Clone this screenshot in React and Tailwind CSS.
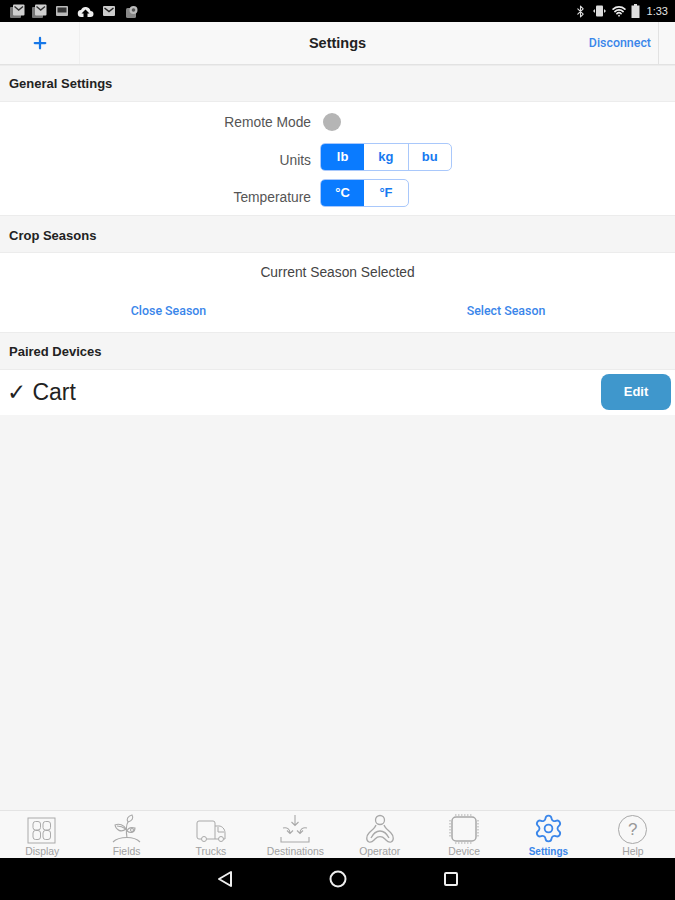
import React from "react";
import { Plus, Bluetooth, Wifi, Settings } from "lucide-react";

const font = { fontFamily: '"Liberation Sans", Arial, sans-serif' };
const linkFont = { fontFamily: 'Roboto, Arial, sans-serif' };

const SectionHeader = ({ title, className = "" }) => (
  <div className={`flex shrink-0 items-center border-y border-[#ececec] bg-[#f5f5f5] pl-[9px] text-[13px] font-bold text-[#222] ${className}`}>
    {title}
  </div>
);

const Segmented = ({ options }) => (
  <div className="flex h-[28px] w-fit overflow-hidden rounded-[5px] border border-[#a9c8fb] bg-white text-[13px] font-bold text-[#1679f0]">
    {options.map((opt, i) => (
      <div
        key={opt}
        className={`flex w-[43.3px] items-center justify-center ${i === 0 ? "bg-[#0a7bff] text-white" : ""} ${i === 2 ? "border-l border-[#a9c8fb]" : ""}`}
      >
        {opt}
      </div>
    ))}
  </div>
);

const SettingRow = ({ label, children, className = "", labelClass = "" }) => (
  <div className={`flex items-center ${className}`}>
    <div className={`w-[311px] text-right text-[13.8px] text-[#555] ${labelClass}`}>{label}</div>
    <div className="ml-[9px]">{children}</div>
  </div>
);

const MailStack = () => (
  <svg width="16" height="16" viewBox="0 0 16 16">
    <rect x="1" y="4" width="11" height="11" rx="1" fill="#777" />
    <rect x="4" y="1.5" width="11.5" height="11" rx="1" fill="#cfcfcf" />
    <path d="M5.5 3.5l4.2 3.5 4.3-3.5" fill="none" stroke="#333" strokeWidth="1.4" />
  </svg>
);

const icons = {
  Display: (
    <svg width="30" height="27" viewBox="0 0 30 27" fill="none" stroke="#aaa" strokeWidth="1">
      <rect x="1" y="1" width="27" height="25" />
      <rect x="6" y="4.5" width="7.5" height="8.5" rx="2.5" />
      <rect x="6" y="13.5" width="7.5" height="9" rx="2.5" />
      <rect x="16" y="4.5" width="7.5" height="8.5" rx="2.5" />
      <rect x="16" y="13.5" width="7.5" height="9" rx="2.5" />
    </svg>
  ),
  Fields: (
    <svg width="30" height="30" viewBox="0 0 30 30" fill="none" stroke="#a8a8a8" strokeWidth="1.1">
      <path d="M16 8c-2-3 0-6 4-7 2 3 0 6-4 7z" />
      <path d="M16 8c-2 3-2 9-1 16" />
      <path d="M14 15c-2-4-7-6-11-4 1 5 6 8 11 4z" />
      <path d="M5 12c3 0 6 1 9 3" />
      <path d="M15 17c1-3 4-4 8-3 0 4-4 6-8 3z" />
      <circle cx="20" cy="16" r="1.5" />
      <path d="M1 28c3-3 8-4.500 14-4.500s10 1.500 13 4.500" />
    </svg>
  ),
  Trucks: (
    <svg width="30" height="24" viewBox="0 0 30 24" fill="none" stroke="#a8a8a8" strokeWidth="1">
      <path d="M5 19H3a2 2 0 0 1-2-2V3a2 2 0 0 1 2-2h14a2 2 0 0 1 2 2v16h-8" />
      <path d="M19 6h4c3 0 6 3 6 7v6h-1M22 19h-3" />
      <path d="M22 7v5h6" />
      <circle cx="8" cy="19" r="2.5" />
      <circle cx="25" cy="19" r="2.5" />
    </svg>
  ),
  Destinations: (
    <svg width="30" height="30" viewBox="0 0 30 30" fill="none" stroke="#a8a8a8" strokeWidth="1.1">
      <path d="M15 1v10M11.500 8l3.500 3.500L18.500 8" />
      <path d="M3 14c4-1 7 1 7 5M7 16.500l3 3 3-3" />
      <path d="M27 14c-4-1-7 1-7 5M17 16.500l3 3 3-3" />
      <path d="M1 23v5h28v-5" />
    </svg>
  ),
  Operator: (
    <svg width="30" height="30" viewBox="0 0 30 30" fill="none" stroke="#a8a8a8" strokeWidth="1.3">
      <circle cx="15" cy="6" r="4.500" />
      <path d="M11 11c-1 3-4 5-7 8-3 3-3 8 0 9 3 1 4-1 6-3 3-3 7-3 10 0 2 2 3 4 6 3 3-1 3-6 0-9-3-3-6-5-7-8" />
      <path d="M6 24c2-4 5-7 9-7s7 3 9 7" />
    </svg>
  ),
  Device: (
    <svg width="30" height="30" viewBox="0 0 30 30" fill="none" stroke="#a8a8a8" strokeWidth="1">
      <rect x="3" y="3" width="24" height="24" rx="4" strokeWidth="1.500" />
      <path strokeDasharray="1.500 1.500" d="M6 1h18M6 29h18M1 6v18M29 6v18" />
    </svg>
  ),
  Help: (
    <div className="flex h-[29px] w-[29px] items-center justify-center rounded-full border border-[#a8a8a8] text-[17px] text-[#999]">
      ?
    </div>
  ),
};

const tabs = ["Display", "Fields", "Trucks", "Destinations", "Operator", "Device", "Settings", "Help"];

export default function App() {
  return (
    <div className="flex h-[900px] w-[675px] flex-col overflow-hidden bg-[#f5f5f5]" style={font}>
      {/* android status bar */}
      <div className="relative flex h-[22px] shrink-0 items-center justify-between bg-black pl-[9px] pr-[7px]">
        <div className="flex items-center gap-[6px]">
          <MailStack />
          <MailStack />
          <svg width="14" height="14" viewBox="0 0 14 14" className="ml-[2px]">
            <rect x="1" y="2" width="12" height="10" rx="1" fill="#bbb" />
            <rect x="2.500" y="3.500" width="9" height="5" fill="#333" />
          </svg>
          <svg width="17" height="15" viewBox="0 0 16 15" fill="#eee" className="ml-[2px]">
            <path d="M4 13a3.500 3.500 0 0 1-.5-7A5 5 0 0 1 13 7a3 3 0 0 1 0 6h-3V9.500h2L8 5.500l-4 4h2V13z" />
          </svg>
          <svg width="14" height="14" viewBox="0 0 14 14" className="ml-[2px]">
            <rect x="1" y="2" width="12" height="10" rx="1" fill="#ccc" />
            <path d="M2.500 4l4.500 3.500L11.500 4" fill="none" stroke="#222" strokeWidth="1.500" />
          </svg>
          <svg width="14" height="15" viewBox="0 0 14 15" className="ml-[3px]">
            <rect x="1" y="4" width="10" height="10" rx="1.500" fill="#888" />
            <circle cx="8.500" cy="6" r="4" fill="#bbb" />
            <circle cx="8.500" cy="6" r="1.800" fill="#555" />
          </svg>
        </div>
        <div className="flex items-center gap-[5px] text-[11px] text-[#e5e5e5]">
          <Bluetooth size={13} color="#ddd" />
          <svg width="15" height="14" viewBox="0 0 15 14" fill="#ddd">
            <rect x="4" y="1.500" width="7" height="11" rx="1" />
            <path d="M1 7l2-2v4zM14 7l-2-2v4z" />
          </svg>
          <Wifi size={14} color="#eee" strokeWidth={3} />
          <svg width="9" height="14" viewBox="0 0 9 14" fill="#ddd">
            <path d="M3 0h3v1.500h2.500V14H.5V1.500H3z" />
          </svg>
          <span className="ml-[2px]">1:33</span>
        </div>
      </div>

      {/* header */}
      <div className="relative flex h-[43px] shrink-0 items-center justify-center border-b border-[#e2e2e2] bg-[#f8f8f8]">
        <div className="absolute inset-y-0 left-0 flex w-[80px] items-center justify-center border-r border-[#efefef]">
          <Plus size={18} color="#1677e8" strokeWidth={3} />
        </div>
        <span className="pt-[2px] text-[14.5px] font-bold text-[#222]">Settings</span>
        <div className="absolute inset-y-0 right-[16px] flex items-center border-r border-[#e2e2e2] pr-[7px] pt-[1px] text-[12.4px] font-medium text-[#3a86ea]" style={linkFont}>
          Disconnect
        </div>
      </div>

      <SectionHeader title="General Settings" className="h-[37px]" />
      <div className="flex h-[113px] shrink-0 flex-col bg-white pt-[5px]">
        <SettingRow label="Remote Mode" className="h-[30px]" labelClass="pt-[2px]">
          <div className="ml-[3px] h-[18px] w-[18px] rounded-full bg-[#b5b5b5]" />
        </SettingRow>
        <SettingRow label="Units" className="mt-[6px] h-[28px]" labelClass="pt-[9px]">
          <Segmented options={["lb", "kg", "bu"]} />
        </SettingRow>
        <SettingRow label="Temperature" className="mt-[8px] h-[28px]" labelClass="pt-[11px]">
          <Segmented options={["°C", "°F"]} />
        </SettingRow>
      </div>

      <SectionHeader title="Crop Seasons" className="h-[38px] pt-[3px]" />
      <div className="h-[79px] shrink-0 bg-white">
        <div className="pt-[10px] text-center text-[13.8px] text-[#444]">Current Season Selected</div>
        <div className="mt-[18px] flex text-[12.4px] font-medium text-[#3a86ea]" style={linkFont}>
          <div className="w-[337px] text-center">Close Season</div>
          <div className="flex-1 text-center">Select Season</div>
        </div>
      </div>

      <SectionHeader title="Paired Devices" className="h-[38px] pt-[2px]" />
      <div className="flex h-[45px] shrink-0 items-center justify-between bg-white pl-[7px] pr-[4px]">
        <span className="text-[23px] text-[#222]">✓ Cart</span>
        <div className="mb-[2px] flex h-[36px] w-[70px] items-center justify-center rounded-[8px] bg-[#3f97cc] text-[13px] font-bold text-white">
          Edit
        </div>
      </div>

      <div className="flex-1" />

      {/* tab bar */}
      <div className="flex h-[48px] shrink-0 border-t border-[#e4e4e4] bg-[#f8f8f8]">
        {tabs.map((tab) => {
          const active = tab === "Settings";
          return (
            <div key={tab} className="flex w-[84.4px] flex-col items-center">
              <div className="flex h-[33px] items-end justify-center">
                {active ? <Settings size={31} color="#3a86ea" strokeWidth={1.4} /> : icons[tab]}
              </div>
              <span className={`mt-[2px] whitespace-nowrap leading-[12px] ${active ? "text-[10px] font-bold text-[#3a86ea]" : "text-[10.4px] text-[#a0a0a0]"}`}>
                {tab}
              </span>
            </div>
          );
        })}
      </div>

      {/* android nav bar */}
      <div className="flex h-[42px] shrink-0 items-center justify-center gap-[96px] bg-black">
        <svg width="16" height="18" viewBox="0 0 16 18" fill="none" stroke="#eee" strokeWidth="2" strokeLinejoin="round">
          <path d="M14 2v14L2 9z" />
        </svg>
        <svg width="18" height="18" viewBox="0 0 18 18" fill="none" stroke="#eee" strokeWidth="2">
          <circle cx="9" cy="9" r="7.500" />
        </svg>
        <svg width="16" height="16" viewBox="0 0 16 16" fill="none" stroke="#eee" strokeWidth="2">
          <rect x="2" y="2" width="12" height="12" rx="1" />
        </svg>
      </div>
    </div>
  );
}
